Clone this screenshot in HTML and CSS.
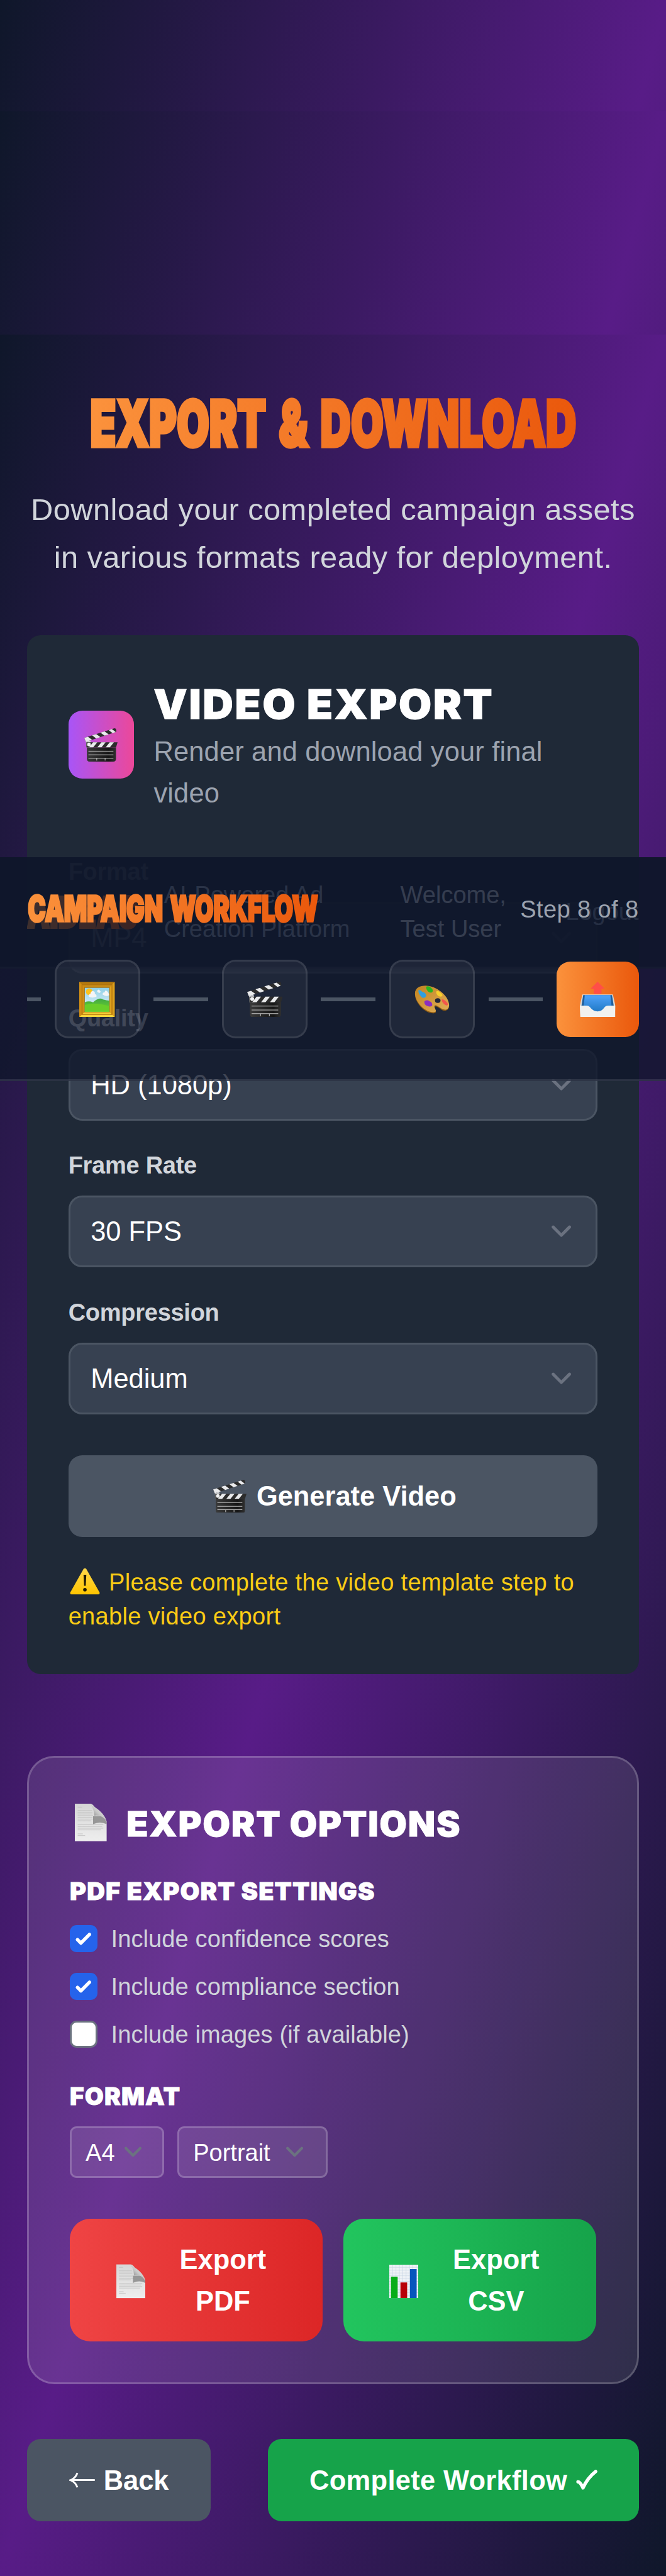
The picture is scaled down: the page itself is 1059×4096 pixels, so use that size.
FILE: index.html
```html
<!DOCTYPE html>
<html lang="en">
<head>
<meta charset="utf-8">
<title>Export &amp; Download</title>
<link rel="stylesheet" href="styles.css">
</head>
<body>
<svg class="defs" aria-hidden="true">
  <defs>
    <linearGradient id="gold" x1="0" y1="0" x2="0" y2="1"><stop offset="0" stop-color="#a8700c"/><stop offset=".2" stop-color="#d99a1c"/><stop offset="1" stop-color="#fbd83a"/></linearGradient>
    <linearGradient id="sky" x1="0" y1="0" x2="0" y2="1"><stop offset="0" stop-color="#8fd0e8"/><stop offset="1" stop-color="#eef6fa"/></linearGradient>
    <linearGradient id="grass" x1="0" y1="0" x2="0" y2="1"><stop offset="0" stop-color="#3fa845"/><stop offset="1" stop-color="#74d728"/></linearGradient>
    <linearGradient id="wood" x1="0" y1="0" x2="1" y2="1"><stop offset="0" stop-color="#c08420"/><stop offset="1" stop-color="#e2ae58"/></linearGradient>
    <linearGradient id="slate" x1="0" y1="0" x2="1" y2="0"><stop offset="0" stop-color="#3a3a3a"/><stop offset=".75" stop-color="#161616"/><stop offset="1" stop-color="#303030"/></linearGradient>
    <linearGradient id="tray" x1="0" y1="0" x2="0" y2="1"><stop offset="0" stop-color="#4fa3fb"/><stop offset="1" stop-color="#1f78c4"/></linearGradient>
    <linearGradient id="paper" x1="0" y1="0" x2="0" y2="1"><stop offset="0" stop-color="#d6d6d6"/><stop offset="1" stop-color="#eeeeee"/></linearGradient>
    <linearGradient id="curl" x1="0" y1="1" x2="1" y2="0"><stop offset="0" stop-color="#555"/><stop offset=".5" stop-color="#c8c8c8"/><stop offset="1" stop-color="#f4f4f4"/></linearGradient>
    <linearGradient id="warn" x1="0" y1="0" x2="0" y2="1"><stop offset="0" stop-color="#ffd84a"/><stop offset="1" stop-color="#ffc400"/></linearGradient>
  </defs>
  <symbol id="clapper" viewBox="0 0 64 64">
    <path d="M3 20 9 18 14 30 14 37 4 37Z" fill="#d4d6d9"/>
    <path d="M0 18.500 58 0Q61 0 61.500 4L61.500 7 3 26Z" fill="#2c2c2c"/>
    <path d="M0 18.500 7 16.300 15 22 3 26ZM15 13.700 23 11.100 31 16.900 23 19.500ZM31 8.600 39 6 47 11.700 39 14.300ZM47 3.500 53 1.600 60.500 7.300 54.500 9.300Z" fill="#e9eaec"/>
    <path d="M4 27H64L61 37H4Z" fill="#2c2c2c"/>
    <path d="M9 37 17 27H25L17 37ZM25 37 33 27H41L33 37ZM41 37 49 27H57L49 37Z" fill="#e9eaec"/>
    <path d="M5 37H61V59Q61 64 56 64H10Q5 64 5 59Z" fill="url(#slate)"/>
    <path d="M8 44H56M8 51H56M8 57.500H56M24 57.500V62M40 57.500V62" stroke="#c9c9c9" stroke-width="1.200" fill="none"/>
    <circle cx="9" cy="31" r="3.500" fill="#f2f3f4"/>
  </symbol>
  <symbol id="picture" viewBox="0 0 64 64">
    <rect x="0" y="0" width="64" height="64" rx="1" fill="url(#gold)"/>
    <path d="M0 0 10 11V54L0 64Z" fill="#d18f14"/><path d="M64 0 54 11V54L64 64Z" fill="#dda01c"/>
    <path d="M5 5H59V59H5Z" fill="none" stroke="#b0720c" stroke-width="1.500"/>
    <rect x="9" y="10" width="46" height="45" fill="#9a6a12"/>
    <rect x="10" y="11" width="44" height="43" fill="url(#sky)"/>
    <circle cx="18" cy="18" r="6" fill="#fbc21c"/>
    <path d="M17 27Q16 23 20 22 21 16 25 17 29 18 28 22 32 23 31 27 24 30 17 27ZM42 23Q42 19 46 19 46 14 50 17 53 20 54 24 48 28 42 23ZM32 17Q35 12 37 16 40 18 37 20 33 20 32 17Z" fill="#f4f5f7"/>
    <path d="M10 37Q17 34 25 37 36 27 43 32 49 34 54 34V54H10Z" fill="url(#grass)"/>
    <path d="M10 42Q26 36 54 44V54H10Z" fill="#68ce2a"/>
  </symbol>
  <symbol id="palette" viewBox="0 0 64 64">
    <path d="M1 23C1 12 10 8 20 8 38 8 62 26 62.500 44 62 53 54 54 48 50 42 45 36 42 36 47 37 51 42 56 35 57 20 58 1 39 1 23Z" fill="#8c5a14"/>
    <path d="M1 21C1 11 10 7 20 7 38 7 62 24 62.500 42 62 52 54 52 48 48 42 43 35 40 36 45 37 50 42 54 35 55 20 56 1 37 1 21Z" fill="url(#wood)"/>
    <path d="M7 16Q10 13 14 18 22 20 21 26 18 31 13 28 7 22 7 16Z" fill="#2f9fe0"/>
    <path d="M21 9Q26 7 30 11 35 15 32 19 27 21 24 17 21 14 21 9Z" fill="#27b61f"/>
    <path d="M39 18Q42 15 46 19 52 23 50 26 46 28 42 25 39 22 39 18Z" fill="#f8cf2c"/>
    <path d="M49 32Q52 31 55 34 61 38 60 42 57 44 53 40 49 36 49 32Z" fill="#f3564c"/>
    <path d="M18 35Q23 32 27 35 33 37 32 43 28 46 24 44 17 42 18 35Z" fill="#8a2fc0"/>
    <ellipse cx="42" cy="34" rx="5" ry="4.200" fill="#222638"/>
  </symbol>
  <symbol id="outbox" viewBox="0 0 64 64">
    <path d="M4.500 23H59.500L64 43V64H1L0 43Z" fill="#d9d9d6"/>
    <path d="M6 24H58L61 43H3Z" fill="#205f9c"/>
    <path d="M9 24H55L57 43 45 55H20L7 43Z" fill="url(#tray)"/>
    <path d="M0 43H12Q17 43 20 48 25 53.500 32 53.500 39 53.500 43 48 46 43 51 43H64L63 64H1Z" fill="#f1f1ef"/>
    <path d="M32 0 44.500 12.500H39V21.500H25V12.500H19.500Z" fill="#ff4f47"/>
  </symbol>
  <symbol id="page" viewBox="0 0 56 66">
    <path d="M0 0H28Q34 2 38 12L56 31V66H0Z" fill="url(#paper)"/>
    <path d="M5 6H13M5 12H30M5 15H31M5 18H31M5 21H32M5 24H31M5 27H34M5 30H28M5 37H50M5 40H48M5 43H50M5 46H46M5 53H14M5 56H18" stroke="#bdbdbd" stroke-width=".900" fill="none"/>
    <path d="M32 22H48L56 32V36Q44 30 32 36Z" fill="#777" opacity=".7"/>
    <path d="M24 0Q33 3 34 21 48 19 56 31 50 12 24 0Z" fill="url(#curl)"/>
  </symbol>
  <symbol id="chart" viewBox="0 0 52 60">
    <path d="M0 0H52V60H0Z" fill="#eef2f7"/>
    <path d="M0 5H52M0 10H52M0 15H52M0 20H52M0 25H52M0 30H52M0 35H52M0 40H52M0 45H52M0 50H52M0 55H52M6 0V60M12 0V60M18 0V60M24 0V60M30 0V60M36 0V60M42 0V60M48 0V60" stroke="#c5d3e2" stroke-width=".700" fill="none"/>
    <path d="M3 21.500H15V60H3Z" fill="#08ad18"/><path d="M20 32H32V60H20Z" fill="#b80008"/><path d="M37 8H49V60H37Z" fill="#0657bd"/>
  </symbol>
  <symbol id="warning" viewBox="0 0 54 48">
    <path d="M24.500 1.500Q27 -1 29.500 1.500L53.500 44Q54 48 51 48H3Q0 48 .500 44Z" fill="url(#warn)"/>
    <path d="M24.500 12H29.500L28.500 32H25.500Z" fill="#201a05"/><circle cx="27" cy="39" r="3.200" fill="#201a05"/>
  </symbol>
  <symbol id="chevron" viewBox="0 0 20 20"><path d="M6 8l4 4 4-4" fill="none" stroke="#6b7280" stroke-width="1.500" stroke-linecap="round" stroke-linejoin="round"/></symbol>
  <symbol id="tick" viewBox="0 0 16 16"><path d="M12.207 4.793a1 1 0 010 1.414l-5 5a1 1 0 01-1.414 0l-2-2a1 1 0 011.414-1.414L6.500 9.086l4.293-4.293a1 1 0 011.414 0z" fill="#fff"/></symbol>
</svg>

<div class="app">
  <div class="workflow">
    <main class="main">
      <div class="hero">
        <h1 class="hero-title"><span class="display display-xl">EXPORT &amp; DOWNLOAD</span></h1>
        <p class="hero-text">Download your completed campaign assets in various formats ready for deployment.</p>
      </div>

      <section class="video-card">
        <div class="video-head">
          <div class="video-icon"><svg class="emoji-20"><use href="#clapper"/></svg></div>
          <div class="video-copy">
            <h2 class="heavy heavy-lg">VIDEO EXPORT</h2>
            <p class="video-sub">Render and download your final video</p>
          </div>
        </div>
        <div class="fields">
          <div class="field"><label>Format</label><div class="select"><span>MP4</span><svg><use href="#chevron"/></svg></div></div>
          <div class="field"><label>Quality</label><div class="select"><span>HD (1080p)</span><svg><use href="#chevron"/></svg></div></div>
          <div class="field"><label>Frame Rate</label><div class="select"><span>30 FPS</span><svg><use href="#chevron"/></svg></div></div>
          <div class="field"><label>Compression</label><div class="select"><span>Medium</span><svg><use href="#chevron"/></svg></div></div>
        </div>
        <button class="btn generate"><svg class="emoji-20"><use href="#clapper"/></svg><span>Generate Video</span></button>
        <p class="notice"><svg class="notice-icon"><use href="#warning"/></svg> Please complete the video template step to enable video export</p>
      </section>

      <section class="options-card">
        <h3 class="options-title"><svg class="page-lg"><use href="#page"/></svg><span class="heavy heavy-md">EXPORT OPTIONS</span></h3>
        <h4 class="heavy heavy-sm pdf-title">PDF EXPORT SETTINGS</h4>
        <div class="checks">
          <label class="check"><span class="box on"><svg><use href="#tick"/></svg></span><span>Include confidence scores</span></label>
          <label class="check"><span class="box on"><svg><use href="#tick"/></svg></span><span>Include compliance section</span></label>
          <label class="check"><span class="box"></span><span>Include images (if available)</span></label>
        </div>
        <h4 class="heavy heavy-sm format-title">FORMAT</h4>
        <div class="minis">
          <div class="mini mini-size"><span>A4</span><svg><use href="#chevron"/></svg></div>
          <div class="mini mini-orient"><span>Portrait</span><svg><use href="#chevron"/></svg></div>
        </div>
        <div class="exports">
          <button class="btn export red"><span class="export-icon"><svg class="page-sm"><use href="#page"/></svg></span><span class="export-text">Export PDF</span></button>
          <button class="btn export green"><span class="export-icon"><svg class="page-sm"><use href="#chart"/></svg></span><span class="export-text">Export CSV</span></button>
        </div>
      </section>

      <div class="actions">
        <button class="btn back"><svg class="arrow" viewBox="0 0 15 10"><path d="M.800 5H15M4.800 .800Q3.600 4 .800 5 3.600 6 4.800 9.200" fill="none" stroke="#fff" stroke-width="1.100"/></svg><span>Back</span></button>
        <button class="btn complete"><span>Complete Workflow</span><svg class="done" viewBox="0 0 12 12"><path d="M1.100 6.800Q2.300 6.800 3.900 10.200 6.500 4.500 11 1" fill="none" stroke="#fff" stroke-width="1.900" stroke-linecap="round" stroke-linejoin="round"/></svg></button>
      </div>
    </main>
  </div>

  <header class="site-header">
    <span class="brand"><span class="display display-md">AIDEAS</span></span>
    <p class="tagline">AI-Powered Ad Creation Platform</p>
    <p class="welcome">Welcome, Test User</p>
    <span class="logout">Logout</span>
  </header>

  <nav class="steps-bar">
    <div class="steps-head">
      <span class="steps-title"><span class="display display-sm">CAMPAIGN WORKFLOW</span></span>
      <span class="steps-count">Step 8 of 8</span>
    </div>
    <div class="steps">
      <i class="line"></i>
      <div class="step"><svg class="emoji-21"><use href="#picture"/></svg></div>
      <i class="line"></i>
      <div class="step"><svg class="emoji-21"><use href="#clapper"/></svg></div>
      <i class="line"></i>
      <div class="step"><svg class="emoji-21"><use href="#palette"/></svg></div>
      <i class="line"></i>
      <div class="step active"><svg class="emoji-21"><use href="#outbox"/></svg></div>
    </div>
  </nav>
</div>
</body>
</html>
```
FILE: styles.css
```css
/* 1rem equals ten layout units on a 390-unit wide screen */
html { font-size: 27.16px; }
* { box-sizing: border-box; margin: 0; padding: 0; }
body {
  font-family: "Liberation Sans", Arial, Helvetica, sans-serif;
  font-size: 1.6rem;
  line-height: 2.4rem;
  color: #fff;
  background: #0f172a;
}
svg { display: block; flex: none; }
.defs { position: absolute; width: 0; height: 0; }

.app, .workflow, .main { background: linear-gradient(to bottom right, #0f172a, #581c87, #0f172a); }
.app { position: relative; height: 4096px; padding-top: 6.5rem; overflow: hidden; }
.workflow { height: 100%; padding-top: 13.1rem; }
.main { height: 100%; padding: 3.2rem 1.6rem; }

/* condensed display lettering */
.display {
  display: inline-block;
  flex: none;
  white-space: nowrap;
  font-family: Inter, "Liberation Sans", sans-serif;
  font-weight: 900;
  word-spacing: .1em;
  background: linear-gradient(to right, #fb923c, #ea580c);
  -webkit-background-clip: text;
  background-clip: text;
  color: transparent;
}
.display-xl { font-size: 3.75rem; line-height: 4rem; transform: scaleX(.656); -webkit-text-stroke: .2rem transparent; }
.display-md { font-size: 2.5rem; line-height: 3.2rem; transform: scaleX(.67); transform-origin: left; -webkit-text-stroke: .14rem transparent; }
.display-sm { font-size: 2.1rem; line-height: 2.8rem; transform: translateX(.05rem) scaleX(.668); transform-origin: left; -webkit-text-stroke: .13rem transparent; }

.heavy { font-family: Inter, "Liberation Sans", sans-serif; font-weight: 900; white-space: nowrap; transform-origin: left; -webkit-text-stroke: .03rem #fff; }
.heavy-lg { font-size: 2.4rem; line-height: 3.2rem; letter-spacing: .08rem; transform: translateY(.06rem) scaleX(1.04); }
.heavy-md { font-size: 2rem; line-height: 2.8rem; letter-spacing: .06rem; transform: translateY(.06rem) scaleX(1.04); }
.heavy-sm { font-size: 1.4rem; line-height: 2rem; letter-spacing: .04rem; }

.hero { text-align: center; margin-bottom: 3.2rem; }
.hero-title { display: flex; justify-content: center; height: 4rem; margin-bottom: 1.6rem; }
.hero-text { font-size: 1.8rem; line-height: 2.8rem; color: #d1d5db; letter-spacing: .0145rem; margin: 0 -.2rem; }

.video-card { background: #1f2937; border-radius: .8rem; padding: 2.4rem; height: 60.8rem; margin-bottom: 4.8rem; }
.video-head { display: flex; align-items: center; gap: 1.17rem; margin-bottom: 2.4rem; }
.video-icon { display: flex; align-items: center; justify-content: center; flex: none; width: 3.83rem; height: 4rem; border-radius: .8rem; background: linear-gradient(to right, #a855f7, #ec4899); }
.video-sub { color: #9ca3af; letter-spacing: .006rem; }
.emoji-20 { width: 1.95rem; height: 1.95rem; }
.emoji-21 { width: 2.08rem; height: 2.08rem; }

/* optical nudge so the text sits on the designed baseline */
.video-sub, .field label, .select span, .btn span, .check span:last-child, .mini span, .hero-text, .steps-count { transform: translateY(.05rem); }

.fields { display: flex; flex-direction: column; gap: 1.6rem; }
.field label { display: block; font-size: 1.4rem; line-height: 2rem; font-weight: 700; color: #d1d5db; margin-bottom: .8rem; letter-spacing: -.01rem; }
.select { display: flex; align-items: center; justify-content: space-between; height: 4.2rem; padding: 0 .8rem 0 1.2rem; background: #374151; border: 3px solid #4b5563; border-radius: .8rem; }
.select svg { width: 2.4rem; height: 2.4rem; }

.btn { display: flex; align-items: center; justify-content: center; border: 0; color: #fff; font: 700 1.6rem/2.4rem "Liberation Sans", Arial, sans-serif; }
.generate { width: 100%; height: 4.8rem; margin-top: 2.4rem; padding-left: .2rem; gap: .6rem; background: #4b5563; border-radius: .8rem; }
.notice { margin-top: 1.6rem; font-size: 1.4rem; line-height: 2rem; color: #facc15; letter-spacing: .0115rem; transform: translateY(.05rem); }
.notice-icon { display: inline-block; width: 1.77rem; height: 1.56rem; margin: -.2rem .12rem 0 .08rem; vertical-align: -.24rem; }

.options-card { height: 36.8rem; padding: calc(2.5rem - 3px); background: rgba(255, 255, 255, .1); border: 3px solid rgba(255, 255, 255, .2); border-radius: 1.6rem; margin-bottom: 3.2rem; }
.options-title { display: flex; align-items: center; height: 2.8rem; gap: 1.15rem; padding-left: .3rem; margin-bottom: 1.6rem; }
.page-lg { width: 1.87rem; height: 2.2rem; }
.pdf-title { margin-bottom: .8rem; transform: translateY(.04rem) scaleX(1.045); }
.checks { display: flex; flex-direction: column; gap: .8rem; margin-bottom: 1.6rem; }
.check { display: flex; align-items: center; gap: .8rem; font-size: 1.4rem; line-height: 2rem; color: #d1d5db; letter-spacing: .004rem; }
.box { width: 1.6rem; height: 1.6rem; border-radius: .4rem; background: #fff; border: 3px solid #6b7280; }
.box.on { background: #2563eb; border: 0; }
.box svg { width: 1.6rem; height: 1.6rem; }
.format-title { margin-bottom: .8rem; transform: translateY(.04rem) scaleX(1.02); }
.minis { display: flex; gap: .8rem; margin-bottom: 2.4rem; }
.mini { display: flex; align-items: center; justify-content: space-between; height: 3rem; padding: 0 .8rem; font-size: 1.4rem; line-height: 2rem; background: rgba(255, 255, 255, .1); border: 3px solid rgba(255, 255, 255, .2); border-radius: .4rem; }
.mini svg { width: 2.1rem; height: 2.1rem; }
.mini-size { width: 5.5rem; }
.mini-orient { width: 8.8rem; }
.exports { display: grid; grid-template-columns: 1fr 1fr; gap: 1.2rem; }
.export { height: 7.2rem; padding: 1.2rem 2.4rem; gap: .8rem; border-radius: 1.2rem; }
.export-icon { display: flex; justify-content: center; flex: none; width: 2.3rem; }
.export-text { flex: 1; text-align: center; }
.page-sm { width: 1.7rem; height: 2rem; }
.red { background: linear-gradient(to right, #ef4444, #dc2626); }
.green { background: linear-gradient(to right, #22c55e, #16a34a); }

.actions { display: flex; justify-content: space-between; }
.actions .btn { height: 4.8rem; border-radius: .8rem; }
.back { width: 10.75rem; gap: .5rem; background: #4b5563; }
.arrow { width: 1.5rem; height: 1rem; }
.complete { width: 21.7rem; gap: .5rem; background: #16a34a; letter-spacing: .012rem; }
.done { width: 1.25rem; height: 1.25rem; }

/* pinned bars stacked over the page content */
.site-header, .steps-bar { position: absolute; left: 0; right: 0; top: 50.2rem; background: rgba(15, 23, 42, .8); border-bottom: 3px solid rgba(255, 255, 255, .1); }
.site-header { display: flex; align-items: center; height: 6.5rem; padding: 0 1.6rem; font-size: 1.4rem; line-height: 2rem; }
.brand { width: 6.4rem; height: 3.2rem; flex: none; }
.tagline { width: 12.2rem; margin-left: 1.6rem; color: #94a3b8; }
.welcome { width: 7rem; margin-left: 1.64rem; color: #cbd5e1; }
.logout { margin-left: auto; color: #7f8ea3; }

.steps-bar { height: 13.1rem; padding: 1.6rem; }
.steps-head { display: flex; align-items: center; justify-content: space-between; height: 2.8rem; margin-bottom: 1.6rem; }
.steps-title { width: 17rem; height: 2.8rem; }
.steps-count { font-size: 1.4rem; line-height: 2rem; color: #9ca3af; letter-spacing: .015rem; }
.steps { display: flex; align-items: center; justify-content: flex-end; gap: .8rem; overflow: hidden; height: 4.6rem; }
.line { flex: none; width: 3.2rem; height: .2rem; background: #4b5563; }
.step { display: flex; align-items: center; justify-content: center; flex: none; width: 5rem; height: 4.6rem; border: 3px solid rgba(255, 255, 255, .1); border-radius: .8rem; background: rgba(255, 255, 255, .06); }
.step.active { width: 4.8rem; height: 4.4rem; border: 0; background: linear-gradient(to right, #fb923c, #ea580c); }
```
